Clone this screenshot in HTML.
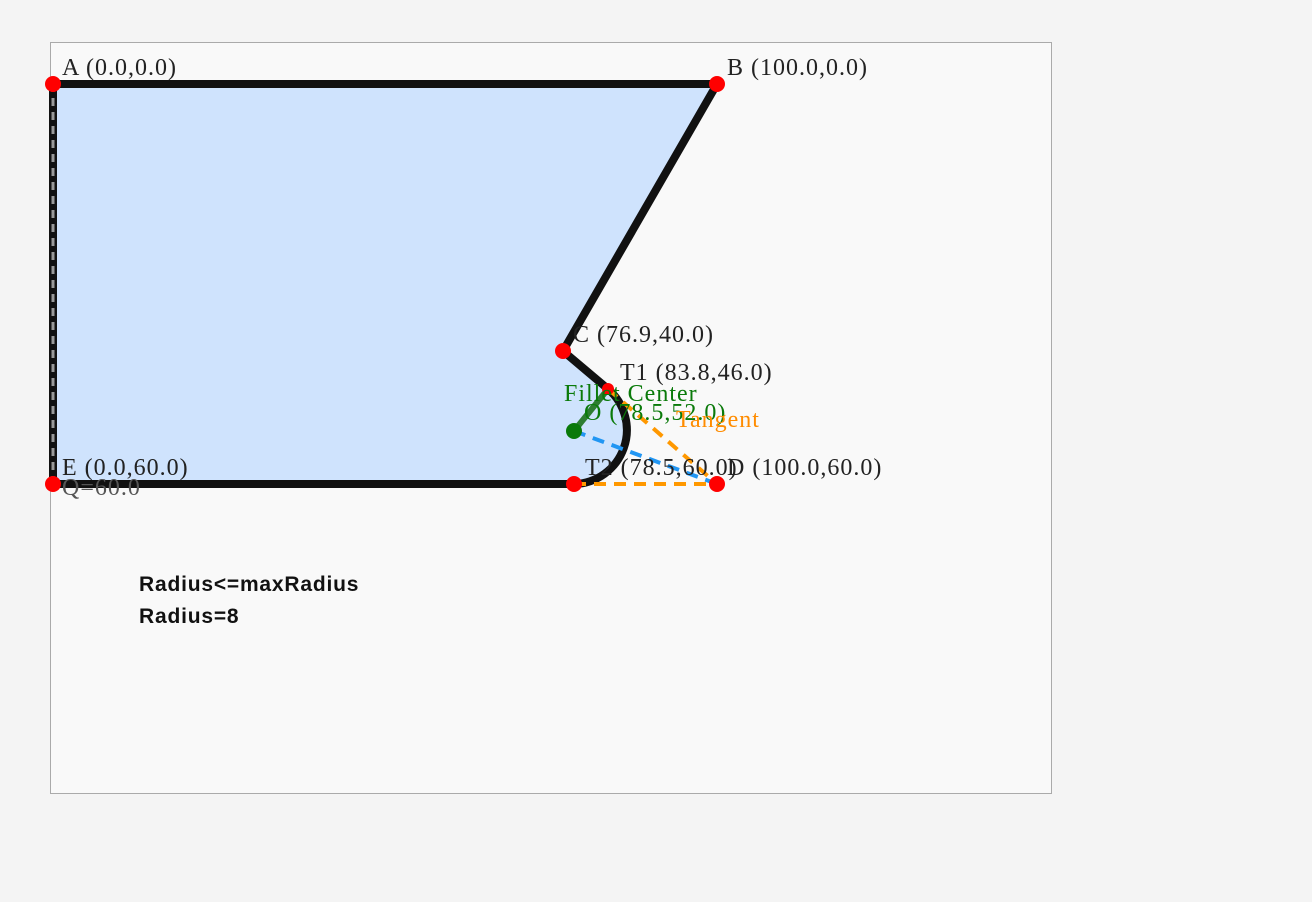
<!DOCTYPE html>
<html><head><style>
html,body{margin:0;padding:0;background:#f4f4f4;width:1312px;height:902px;overflow:hidden}
#box{position:absolute;left:50px;top:42px;width:1000px;height:750px;background:#f9f9f9;border:1px solid #aaa}
svg{position:absolute;left:0;top:0}
.t{font-family:"Liberation Serif",serif;font-size:24px;letter-spacing:1px;fill:#222}
.b{font-family:"Liberation Sans",sans-serif;font-weight:bold;font-size:21px;letter-spacing:0.8px;fill:#111}
</style></head><body>
<div id="box"></div>
<svg width="1312" height="902" viewBox="0 0 1312 902">
<path d="M53 84 L717 84 L563 351 L608 389 A54 54 0 0 1 574 484 L53 484 Z" fill="#cfe3fd" stroke="#111" stroke-width="8" stroke-linejoin="miter"/>
<line x1="53" y1="84" x2="53" y2="484" stroke="#999" stroke-width="3" stroke-dasharray="8 6"/>
<line x1="574" y1="431" x2="608" y2="389" stroke="#2e7d32" stroke-width="6"/>
<line x1="574" y1="431" x2="717" y2="484" stroke="#2196f3" stroke-width="4" stroke-dasharray="12 8"/>
<line x1="608" y1="389" x2="717" y2="484" stroke="#ff9800" stroke-width="4" stroke-dasharray="12 8"/>
<line x1="574" y1="484" x2="717" y2="484" stroke="#ff9800" stroke-width="4" stroke-dasharray="12 8"/>
<circle cx="53" cy="84" r="8" fill="red"/>
<circle cx="717" cy="84" r="8" fill="red"/>
<circle cx="563" cy="351" r="8" fill="red"/>
<circle cx="608" cy="389" r="6" fill="red"/>
<circle cx="574" cy="484" r="8" fill="red"/>
<circle cx="717" cy="484" r="8" fill="red"/>
<circle cx="53" cy="484" r="8" fill="red"/>
<circle cx="574" cy="431" r="8" fill="#0a7a0a"/>
<text class="t" x="62" y="75">A (0.0,0.0)</text>
<text class="t" x="727" y="75">B (100.0,0.0)</text>
<text class="t" x="573" y="342">C (76.9,40.0)</text>
<text class="t" x="620" y="380">T1 (83.8,46.0)</text>
<text class="t" x="564" y="401" style="fill:#0a7a0a">Fillet Center</text>
<text class="t" x="584" y="420" style="fill:#0a7a0a">O (78.5,52.0)</text>
<text class="t" x="676" y="427" style="fill:#ff8c00">Tangent</text>
<text class="t" x="585" y="475">T2 (78.5,60.0)</text>
<text class="t" x="727" y="475">D (100.0,60.0)</text>
<text class="t" x="62" y="475">E (0.0,60.0)</text>
<text class="t" x="62" y="495" style="fill:#555">Q=60.0</text>
<text class="b" x="139" y="591">Radius&lt;=maxRadius</text>
<text class="b" x="139" y="623">Radius=8</text>
</svg>
</body></html>
